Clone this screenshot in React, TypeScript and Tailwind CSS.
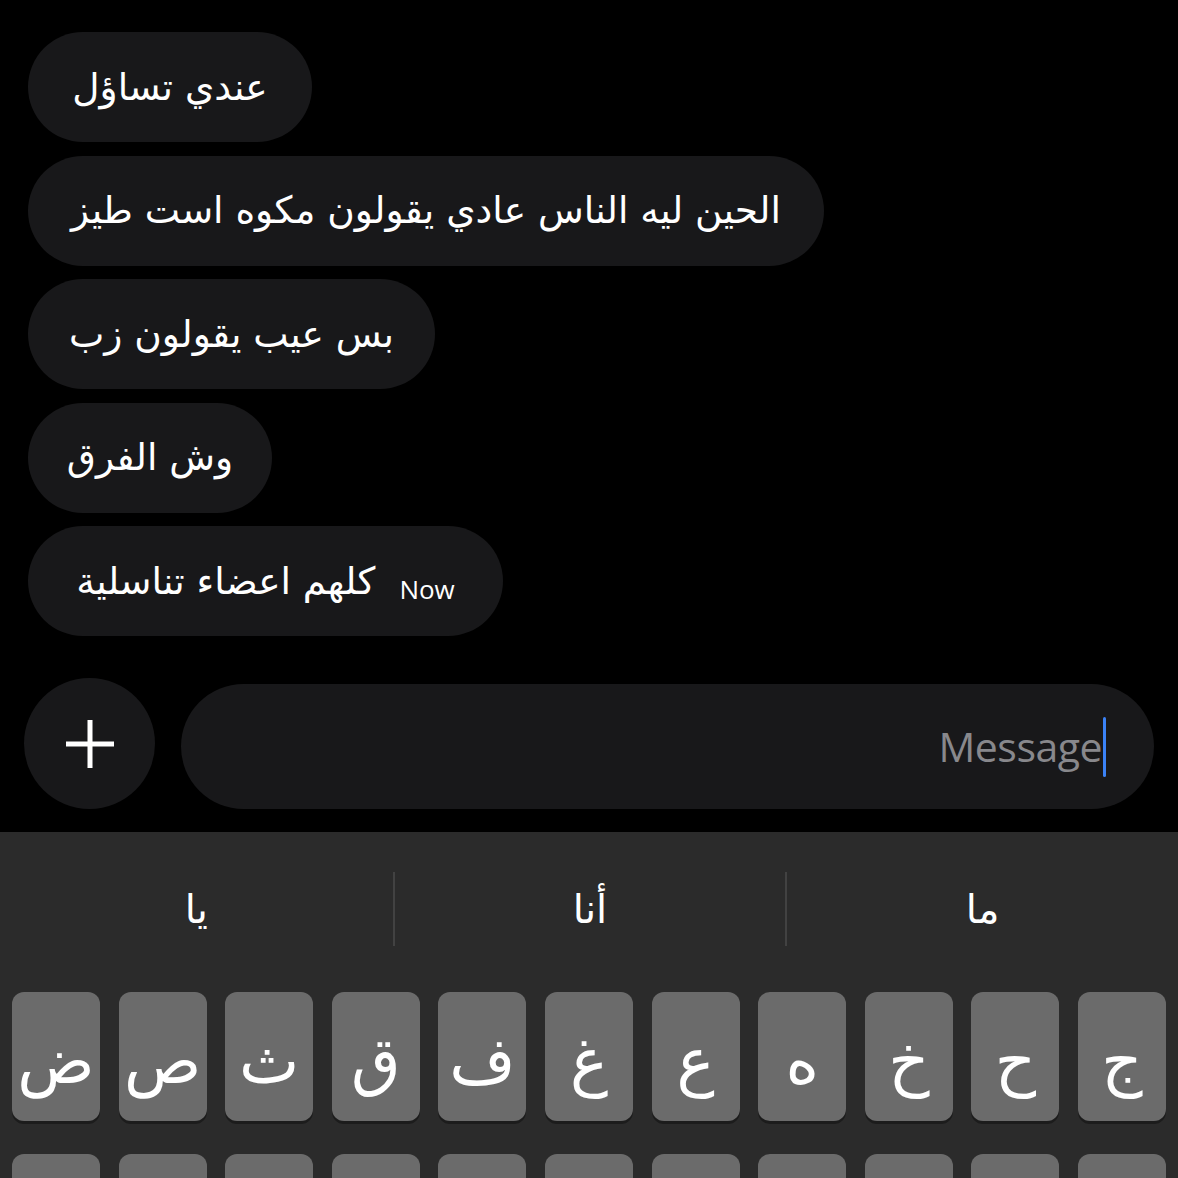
const messages = [
  { text: "عندي تساؤل", w: "w-[284px]" },
  { text: "الحين ليه الناس عادي يقولون مكوه است طيز", w: "w-[796px]" },
  { text: "بس عيب يقولون زب", w: "w-[407px]" },
  { text: "وش الفرق", w: "w-[244px]" },
];

const row1 = ["ض", "ص", "ث", "ق", "ف", "غ", "ع", "ه", "خ", "ح", "ج"];

const arabic = "font-['DejaVu_Sans',sans-serif]";

function Key({ ch }: { ch?: string }) {
  return (
    <div className="flex h-[129px] items-center justify-center rounded-[12px] bg-[#6b6b6b] shadow-[0_3px_0_#1c1c1c]">
      {ch && <span className={`${arabic} mt-[8px] text-[64px] leading-none text-white`}>{ch}</span>}
    </div>
  );
}

export default function App() {
  return (
    <div className="flex h-[1178px] w-[1178px] flex-col overflow-hidden bg-black">
      <div className="flex flex-col items-start gap-[13.5px] pl-[28px] pt-[32px]">
        {messages.map((m) => (
          <div
            key={m.text}
            dir="rtl"
            className={`flex h-[110px] ${m.w} items-center justify-center rounded-full bg-[#18181a]`}
          >
            <span className={`${arabic} text-[37.5px] text-white`}>{m.text}</span>
          </div>
        ))}
        <div className="flex h-[110px] w-[475px] items-center justify-center gap-[24px] rounded-full bg-[#18181a]">
          <span dir="rtl" className={`${arabic} text-[37.5px] text-white`}>
            كلهم اعضاء تناسلية
          </span>
          <span className="mt-[16px] font-['Open_Sans',sans-serif] text-[26px] text-white">Now</span>
        </div>
      </div>

      <div className="mt-[42px] flex items-end gap-[26px] pl-[24px]">
        <div className="flex h-[131px] w-[131px] items-center justify-center rounded-full bg-[#18181a]">
          <svg width="52" height="52" viewBox="0 0 52 52">
            <path d="M26 2v48M2 26h48" stroke="white" strokeWidth="5" />
          </svg>
        </div>
        <div className="flex h-[125px] w-[973px] items-center justify-end rounded-full bg-[#18181a] pr-[48px]">
          <span className="font-['Open_Sans',sans-serif] text-[41px] tracking-[-0.5px] text-[#88888c]">Message</span>
          <span className="ml-[1px] h-[60px] w-[3px] rounded-full bg-[#3b82f6]" />
        </div>
      </div>

      <div className="mt-[23px] flex-1 bg-[#2b2b2b]">
        <div className="grid grid-cols-3 pt-[40px]" dir="ltr">
          {["يا", "أنا", "ما"].map((s, i) => (
            <div
              key={s}
              className={`flex h-[74px] items-center justify-center ${i > 0 ? "border-l-2 border-[#424242]" : ""}`}
            >
              <span className={`${arabic} text-[40px] text-white`}>{s}</span>
            </div>
          ))}
        </div>
        <div className="mt-[46px] grid grid-cols-11 gap-[18.6px] px-[12px]">
          {row1.map((c) => (
            <Key key={c} ch={c} />
          ))}
        </div>
        <div className="mt-[33px] grid grid-cols-11 gap-[18.6px] px-[12px]">
          {row1.map((c) => (
            <Key key={c} />
          ))}
        </div>
      </div>
    </div>
  );
}
